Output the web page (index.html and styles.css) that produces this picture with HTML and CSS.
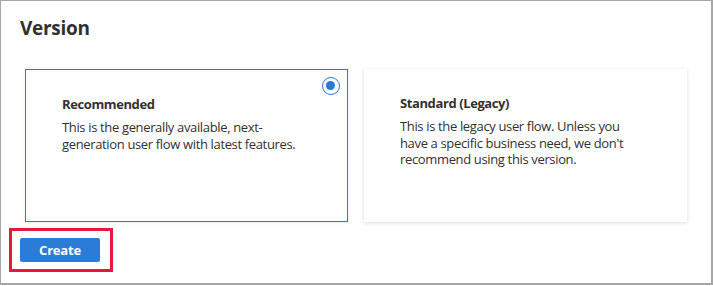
FILE: index.html
```html
<!DOCTYPE html><html lang="en">
<head>
  <meta charset="UTF-8" />
  <title>Version</title>
  <link rel="stylesheet" href="styles.css">
</head>
<body>
  <div class="frame">
    <h1 class="heading">Version</h1>
    <div class="cards">
      <div class="card selected">
        <span class="radio"></span>
        <div class="cardTitle">Recommended</div>
        <p class="cardText">This is the generally available, next-<br>generation user flow with latest features.</p>
      </div>
      <div class="card">
        <div class="cardTitle">Standard (Legacy)</div>
        <p class="cardText">This is the legacy user flow. Unless you<br>have a specific business need, we don't<br>recommend using this version.</p>
      </div>
    </div>
    <div class="highlight">
      <button class="createBtn">Create</button>
    </div>
  </div>
</body>
</html>
```

FILE: styles.css
```css
body {
  margin: 0;
  background: #fff;
  font-family: "Open Sans", "Noto Sans", sans-serif;
  color: #323130;
}
.frame {
  width: 713px;
  height: 285px;
  box-sizing: border-box;
  border: 2px solid #a6a6a6;
  border-top-width: 1px;
  border-left-width: 1px;
  padding: 14px 19px 0;
}
.heading {
  margin: 0;
  font-size: 19px;
  font-weight: 700;
  line-height: 26px;
  letter-spacing: -0.3px;
}
.cards {
  display: flex;
  gap: 16px;
  margin: 28px 0 0 5px;
}
.card {
  position: relative;
  width: 323px;
  height: 153px;
  box-sizing: border-box;
  padding: 26px 36px 0;
  background: #fff;
  box-shadow: 0 1px 4px rgba(0, 0, 0, 0.14);
}
.card.selected {
  border: 1px solid #2b78d6;
  box-shadow: 0 1px 3px rgba(0, 0, 0, 0.08);
}
.radio {
  position: absolute;
  top: 7px;
  right: 7px;
  width: 18px;
  height: 18px;
  box-sizing: border-box;
  border: 1.5px solid #2b78d6;
  border-radius: 50%;
}
.radio::after {
  content: "";
  position: absolute;
  top: 3px;
  left: 3px;
  width: 9px;
  height: 9px;
  border-radius: 50%;
  background: #2b78d6;
}
.cardTitle {
  font-size: 13px;
  font-weight: 700;
  line-height: 17px;
  letter-spacing: -0.4px;
}
.cardText {
  margin: 6px 0 0;
  font-size: 13px;
  line-height: 16.7px;
  letter-spacing: -0.35px;
}
.highlight {
  display: inline-flex;
  margin: 6px 0 0 -11px;
  padding: 7px 10px 7px 8px;
  border: 3px solid #e8173c;
}
.createBtn {
  width: 80px;
  height: 24px;
  padding: 0;
  border: none;
  border-radius: 2px;
  background: #2b7bd8;
  color: #fff;
  font-family: "Open Sans", "Noto Sans", sans-serif;
  font-size: 13px;
  font-weight: 700;
  letter-spacing: -0.2px;
}
```
